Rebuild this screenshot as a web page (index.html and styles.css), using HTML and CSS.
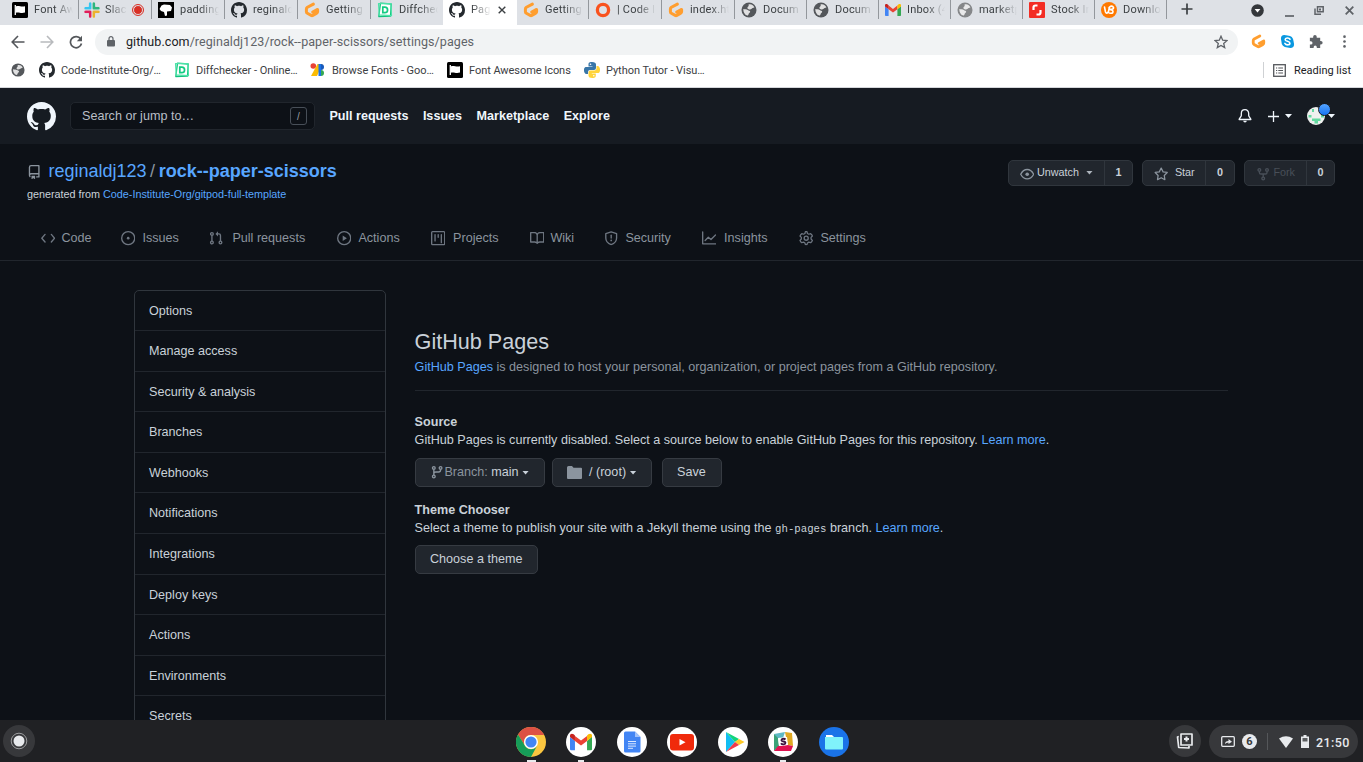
FILE: index.html
```html
<!DOCTYPE html>
<html lang="en">
<head>
<meta charset="utf-8">
<title>Pages</title>
<link rel="stylesheet" href="styles.css">
</head>
<body>
<svg class="defs" aria-hidden="true">
  <symbol id="github" viewBox="0 0 16 16"><path d="M8 0C3.58 0 0 3.58 0 8c0 3.54 2.29 6.53 5.47 7.59.4.07.55-.17.55-.38 0-.19-.01-.82-.01-1.49-2.01.37-2.53-.49-2.69-.94-.09-.23-.48-.94-.82-1.13-.28-.15-.68-.52-.01-.53.63-.01 1.08.58 1.23.82.72 1.21 1.87.87 2.33.66.07-.52.28-.87.51-1.07-1.78-.2-3.64-.89-3.64-3.95 0-.87.31-1.59.82-2.15-.08-.2-.36-1.02.08-2.12 0 0 .67-.21 2.2.82.64-.18 1.32-.27 2-.27.68 0 1.36.09 2 .27 1.53-1.04 2.2-.82 2.2-.82.44 1.1.16 1.92.08 2.12.51.56.82 1.27.82 2.15 0 3.07-1.87 3.75-3.65 3.95.29.25.54.73.54 1.48 0 1.07-.01 1.93-.01 2.2 0 .21.15.46.55.38A8.013 8.013 0 0016 8c0-4.42-3.58-8-8-8z"/></symbol>
  <symbol id="flag" viewBox="0 0 16 16"><rect width="16" height="16" rx="1.5" fill="#000"/><path d="M3.300 3v10" stroke="#fff" stroke-width="1.300"/><path d="M3.800 4.400c3-1.200 5 .8 9.200-.2v6.400c-4.200 1.200-6.200-.8-9.200.2z" fill="#fff"/></symbol>
  <symbol id="slack" viewBox="0 0 16 16"><g stroke-width="3" stroke-linecap="round"><path d="M6.200 1.800v4.400H1.800" fill="none" stroke="#36c5f0" stroke-linejoin="round"/><path d="M9.800 1.800v4.400h4.400" fill="none" stroke="#2eb67d" stroke-linejoin="round"/><path d="M14.200 9.800H9.800v4.400" fill="none" stroke="#ecb22e" stroke-linejoin="round"/><path d="M1.800 9.800h4.400v4.400" fill="none" stroke="#e01e5a" stroke-linejoin="round"/></g><path d="M4.300 0v4.500H0M11.700 0v4.500H16M16 11.500h-4.500V16M0 11.500h4.500V16M8 0v16M0 8h16" fill="none" stroke="#dee1e6" stroke-width=".8"/></symbol>
  <symbol id="padfav" viewBox="0 0 16 16"><rect width="16" height="16" fill="#000"/><path d="M1.500 7l2-3.500L6 2.500l6 .5 2 2.500-1 3.500-4 .5v4l-2 .5-1-4-3-1z" fill="#fff"/></symbol>
  <symbol id="gitpod" viewBox="0 0 16 16"><path d="M9.400 2.100L3.400 5.300Q2.400 6 2.400 7v2.700q0 1 .9 1.500l3.900 2.200q.8.500 1.600 0l4-2.300q.8-.5.8-1.400V7.400L8.700 10" fill="none" stroke="#ff9e2f" stroke-width="3" stroke-linecap="round" stroke-linejoin="round"/></symbol>
  <symbol id="diff" viewBox="0 0 16 16"><path d="M3.500 1.200L14.200 2 13.500 14 1.800 14.500z" fill="#fff" stroke="#10c27c" stroke-width="1.300" stroke-linejoin="round"/><path d="M1.500 1.500l12.500.2.500 12-12.200-.8z" fill="none" stroke="#4be3a8" stroke-width="1.200" stroke-linejoin="round"/><path d="M5.800 5.200h2c3.700 0 3.700 5.400 0 5.400h-2z" fill="none" stroke="#13cb82" stroke-width="1.700"/></symbol>
  <symbol id="globe" viewBox="0 0 16 16"><circle cx="8" cy="8" r="7.500"/><path d="M7.500 2.500c2.500-1 5.200.8 5.900 3-1.500.6-2 .3-2.700 1.200-1 .1-1.500 1.300-3 .6-1-.3-1.600-.9-1.200-2 .5-.9 1.700-.8 1-2.800zM2.300 7c1.500.3 3.500.2 4.500 1 .7.700 2.300.6 2.400 1.700.1 1-1.300 1-1.500 2-.2 1-.6 1.800-1.500 1.900C3.600 12.800 2.200 10 2.300 7z" fill="#fff" opacity=".82"/></symbol>
  <symbol id="gmail" viewBox="0 0 20 16"><path d="M0 3v11.500q0 1 1 1h3.500V7L0 3.500z" fill="#4285f4"/><path d="M15.500 7v8.500H19q1 0 1-1V3z" fill="#34a853"/><path d="M4.500 7V2.500L10 6.600l5.500-4.100V7L10 11.200z" fill="#ea4335"/><path d="M0 3.500V2.200C0 .5 1.800-.1 3.300 1l1.200 1v5z" fill="#c5221f"/><path d="M20 3.500V2.200C20 .5 18.200-.1 16.700 1l-1.200 1v5z" fill="#fbbc04"/></symbol>
  <symbol id="repo" viewBox="0 0 16 16"><path fill-rule="evenodd" d="M2 2.500A2.500 2.500 0 014.500 0h8.750a.75.75 0 01.75.75v12.500a.75.75 0 01-.75.75h-2.500a.75.75 0 110-1.500h1.750v-2h-8a1 1 0 00-.714 1.700.75.75 0 01-1.072 1.050A2.495 2.495 0 012 11.500v-9zm10.500-1V9h-8c-.356 0-.694.074-1 .208V2.500a1 1 0 011-1h8zM5 12.250v3.250a.25.25 0 00.4.2l1.450-1.087a.25.25 0 01.3 0L8.600 15.700a.25.25 0 00.4-.2v-3.250a.25.25 0 00-.25-.25h-3.500a.25.25 0 00-.25.25z"/></symbol>
  <symbol id="code" viewBox="0 0 16 16"><path d="M4.500 3.800L.9 8l3.600 4.200M11.500 3.800L15.100 8l-3.600 4.200" fill="none" stroke="currentColor" stroke-width="1.500" stroke-linecap="round" stroke-linejoin="round"/></symbol>
  <symbol id="issue" viewBox="0 0 16 16"><circle cx="8" cy="8" r="7.250" fill="none" stroke="currentColor" stroke-width="1.500"/><circle cx="8" cy="8" r="1.500"/></symbol>
  <symbol id="pr" viewBox="0 0 16 16"><g fill="none" stroke="currentColor" stroke-width="1.500"><circle cx="3.250" cy="3.250" r="1.500"/><circle cx="3.250" cy="12.750" r="1.500"/><circle cx="12.750" cy="12.750" r="1.500"/><path d="M3.250 5v6M12.750 11V5q0-1.750-1.750-1.750H8.500"/></g><path d="M7.200 3.250L10 .4v5.700z"/></symbol>
  <symbol id="play" viewBox="0 0 16 16"><circle cx="8" cy="8" r="7.250" fill="none" stroke="currentColor" stroke-width="1.500"/><path d="M6.300 5l4.700 3-4.700 3z"/></symbol>
  <symbol id="project" viewBox="0 0 16 16"><rect x=".75" y=".75" width="14.500" height="14.500" rx="1" fill="none" stroke="currentColor" stroke-width="1.500"/><path d="M4.500 4v7M8 4v3M11.500 4v9" stroke="currentColor" stroke-width="1.500" stroke-linecap="round"/></symbol>
  <symbol id="book" viewBox="0 0 16 16"><path fill-rule="evenodd" d="M0 1.750A.75.75 0 01.75 1h4.253c1.227 0 2.317.590 3 1.501A3.744 3.744 0 0111.006 1h4.245a.75.75 0 01.75.75v10.500a.75.75 0 01-.75.75h-4.507a2.250 2.250 0 00-1.591.659l-.622.621a.75.75 0 01-1.060 0l-.622-.621A2.250 2.250 0 005.258 13H.75a.75.75 0 01-.75-.75V1.750zm8.755 3a2.250 2.250 0 012.250-2.250H14.500v9h-3.757c-.710 0-1.400.201-1.992.572l.004-7.322zm-1.504 7.324l.004-5.073-.002-2.253A2.250 2.250 0 005.003 2.500H1.500v9h3.757a3.750 3.750 0 011.994.574z"/></symbol>
  <symbol id="shield" viewBox="0 0 16 16"><path d="M8 .9l6 1.900v4.900c0 3.800-2.600 6.200-6 7.500-3.400-1.300-6-3.700-6-7.500V2.800z" fill="none" stroke="currentColor" stroke-width="1.500" stroke-linejoin="round"/><path d="M8 4.700v3.100" stroke="currentColor" stroke-width="1.500" stroke-linecap="round"/><circle cx="8" cy="10.500" r="1"/></symbol>
  <symbol id="graph" viewBox="0 0 16 16"><path d="M.75 1v13.250H16M3.500 10.500L7 7l3 2.500 5-5" fill="none" stroke="currentColor" stroke-width="1.500" stroke-linecap="round" stroke-linejoin="round"/></symbol>
  <symbol id="gear" viewBox="0 0 16 16"><path d="M7.100.8h1.800l.5 2 1.500.8 2-.6 1.300 1.200.7 1.400-1.500 1.500v1.800l1.500 1.500-.8 1.500-1.200 1.100-2-.6-1.500.9-.5 1.900H7.100l-.5-1.900-1.500-.9-2 .6-1.200-1.100-.8-1.500 1.500-1.500V7.100L1.100 5.600l.8-1.400L3.100 3l2 .6 1.500-.8z" fill="none" stroke="currentColor" stroke-width="1.400" stroke-linejoin="round"/><circle cx="8" cy="8" r="2.250" fill="none" stroke="currentColor" stroke-width="1.500"/></symbol>
  <symbol id="bell" viewBox="0 0 16 16"><path d="M8 .8c-2.500 0-4.200 1.800-4.200 4.200v2.500c0 1.200-2.500 3.500-2.500 4.500h13.400c0-1-2.500-3.300-2.500-4.500V5C12.200 2.600 10.500.8 8 .8z" fill="none" stroke="currentColor" stroke-width="1.500" stroke-linejoin="round"/><path d="M6 13.500h4a2 2 0 01-4 0z"/></symbol>
  <symbol id="eye" viewBox="0 0 16 16"><path d="M.8 8C2.300 5.200 4.800 2.800 8 2.800S13.700 5.200 15.200 8C13.700 10.800 11.200 13.200 8 13.200S2.300 10.800.8 8z" fill="none" stroke="currentColor" stroke-width="1.500"/><circle cx="8" cy="8" r="2"/></symbol>
  <symbol id="star" viewBox="0 0 16 16"><path d="M8 1.200l2.100 4.200 4.600.7-3.300 3.300.7 4.700L8 11.900l-4.100 2.200.7-4.700L1.300 6.100l4.600-.7z" fill="none" stroke="currentColor" stroke-width="1.400" stroke-linejoin="round"/></symbol>
  <symbol id="fork" viewBox="0 0 16 16"><g fill="none" stroke="currentColor" stroke-width="1.500"><circle cx="3.750" cy="3.250" r="1.500"/><circle cx="12.250" cy="3.250" r="1.500"/><circle cx="8" cy="12.750" r="1.500"/><path d="M3.750 5v1q0 1.750 1.750 1.750h5Q12.250 7.750 12.250 6V5M8 7.750V11"/></g></symbol>
  <symbol id="branch" viewBox="0 0 16 16"><g fill="none" stroke="currentColor" stroke-width="1.500"><circle cx="4.250" cy="3.250" r="1.500"/><circle cx="4.250" cy="12.750" r="1.500"/><circle cx="11.750" cy="3.250" r="1.500"/><path d="M4.250 5v6M11.750 5v.5Q11.750 7.750 9.500 7.750H6.500q-2.250 0-2.250 2"/></g></symbol>
  <symbol id="python" viewBox="0 0 16 16"><path d="M8 0C4.500 0 4.500 1 4.500 3v1.500h4V5H2.500C0 5 0 7 0 8.500S.8 12 2.500 12H4v-2q0-2 2-2h4q2 0 2-2V2.500Q12 0 8 0z" fill="#3976a8"/><path d="M8.300 16c3.500 0 3.500-1 3.500-3v-1.500h-4V11h6C16 11 16 9 16 7.500S15.200 4 13.500 4h-1v2.500q0 2-2 2h-4q-2 0-2 2v3q0 2.500 3.800 2.500z" fill="#ffd43b"/><circle cx="6.500" cy="2.300" r=".8" fill="#fff"/><circle cx="9.800" cy="13.700" r=".8" fill="#fff"/></symbol>
</svg>

<div class="tabstrip">
  <div class="tabs">
    <div class="tab"><svg class="fav"><use href="#flag"/></svg><span class="title">Font Aw</span></div>
    <div class="tab recording"><svg class="fav"><use href="#slack"/></svg><span class="title">Slac</span><i class="rec"></i></div>
    <div class="tab"><svg class="fav"><use href="#padfav"/></svg><span class="title">padding</span></div>
    <div class="tab"><svg class="fav ink"><use href="#github"/></svg><span class="title">reginald</span></div>
    <div class="tab"><svg class="fav"><use href="#gitpod"/></svg><span class="title">Getting</span></div>
    <div class="tab before"><svg class="fav"><use href="#diff"/></svg><span class="title">Diffchec</span></div>
    <div class="tab active"><svg class="fav ink"><use href="#github"/></svg><span class="title">Pag</span><svg class="close" viewBox="0 0 8 8"><path d="M.7.7l6.600 6.600M7.300.7L.7 7.300"/></svg></div>
    <div class="tab after"><svg class="fav"><use href="#gitpod"/></svg><span class="title">Getting</span></div>
    <div class="tab"><svg class="fav" viewBox="0 0 16 16"><circle cx="8" cy="8" r="5.600" fill="none" stroke="#f9521e" stroke-width="3.300"/></svg><span class="title">| Code In</span></div>
    <div class="tab"><svg class="fav"><use href="#gitpod"/></svg><span class="title">index.ht</span></div>
    <div class="tab"><svg class="fav gray"><use href="#globe"/></svg><span class="title">Docum</span></div>
    <div class="tab"><svg class="fav gray"><use href="#globe"/></svg><span class="title">Docum</span></div>
    <div class="tab"><svg class="fav"><use href="#gmail"/></svg><span class="title">Inbox (4</span></div>
    <div class="tab"><svg class="fav light"><use href="#globe"/></svg><span class="title">marketp</span></div>
    <div class="tab"><svg class="fav" viewBox="0 0 16 16"><rect width="16" height="16" rx="1" fill="#f32d24"/><path d="M8.500 3.500H6.500Q4.500 3.500 4.500 5.500V8M7.500 12.500h2q2 0 2-2V8" fill="none" stroke="#fff" stroke-width="2.200"/></svg><span class="title">Stock In</span></div>
    <div class="tab"><svg class="fav" viewBox="0 0 16 16"><circle cx="8" cy="8" r="8" fill="#ff7900"/><path d="M3.500 5l1 5q1 2.500 3-.5l1-4.500q2.500-2 4 .5c.5 2-3 2-4 1.500 1 2 3.500 0 3.500 2.500s-3.500 2-4.500 1" fill="none" stroke="#fff" stroke-width="1.600" stroke-linecap="round"/></svg><span class="title">Downlo</span></div>
  </div>
  <svg class="newtab" viewBox="0 0 12 12"><path d="M6 .5v11M.5 6h11" stroke="#3c4043" stroke-width="1.700"/></svg>
  <div class="winbtns">
    <svg width="13" height="13" viewBox="0 0 13 13"><circle cx="6.500" cy="6.500" r="6.300" fill="#34373b"/><path d="M3.600 5h5.800L6.500 8.500z" fill="#fff"/></svg>
    <svg class="minimize" width="9" height="12" viewBox="0 0 9 12"><path d="M0 11h9" stroke="#5f6368" stroke-width="1.700"/></svg>
    <svg width="10" height="9" viewBox="0 0 10 9"><path d="M3.500.8h5.700v5H3.500zM1 2.500v5.700h6" fill="none" stroke="#5f6368" stroke-width="1.500"/><path d="M5 2.500h2v2H5z" fill="#5f6368"/></svg>
    <svg width="9" height="9" viewBox="0 0 9 9"><path d="M.7.700l7.600 7.600M8.300.7L.7 8.300" stroke="#5f6368" stroke-width="1.800"/></svg>
  </div>
</div>

<div class="toolbar">
  <div class="navbtns">
    <svg viewBox="0 0 14 14"><path d="M13.500 7H1.500M7 1L1.200 7 7 13" fill="none" stroke="#54575b" stroke-width="1.600"/></svg>
    <svg viewBox="0 0 14 14"><path d="M.5 7h12M7 1l5.800 6L7 13" fill="none" stroke="#b8babd" stroke-width="1.600"/></svg>
    <svg viewBox="0 0 14 14"><path d="M11.700 4A5.600 5.600 0 1012.500 8.500" fill="none" stroke="#54575b" stroke-width="1.700"/><path d="M13 .8v5.400H7.800z" fill="#54575b"/></svg>
  </div>
  <div class="omnibox">
    <svg class="lock" viewBox="0 0 8 11"><rect y="4" width="8" height="6.500" rx="1" fill="#5f6368"/><path d="M2 4.500V2.700a2 2 0 014 0v1.800" fill="none" stroke="#5f6368" stroke-width="1.200"/></svg>
    <span class="url"><b>github.com</b>/reginaldj123/rock--paper-scissors/settings/pages</span>
    <svg class="bookmark-star" viewBox="0 0 14 14"><path d="M7 1.200l1.700 4 4.300.4-3.300 2.800 1 4.200L7 10.400l-3.700 2.200 1-4.200L1 5.600l4.300-.4z" fill="none" stroke="#5f6368" stroke-width="1.300"/></svg>
  </div>
  <div class="extensions">
    <svg viewBox="0 0 16 16"><use href="#gitpod"/></svg>
    <svg viewBox="0 0 16 16"><path d="M4.500 1Q1 1 1 5l.5 3Q1.500 14 8 14.500L11 15q4 0 4-4l-.5-3Q14 1.500 8 1.500z" fill="#0a98e0"/><path d="M10.700 5.600C9.500 3.500 5.500 4 5.500 6S10.600 7.600 10.600 9.800 6.500 12.200 5.200 10" fill="none" stroke="#fff" stroke-width="1.700" stroke-linecap="round"/></svg>
    <svg viewBox="0 0 16 16"><path d="M2 4h3.500V3a1.900 1.900 0 013.800 0v1H13v3.500h.7a1.900 1.900 0 010 3.800H13V15H9.400v-1a1.700 1.700 0 00-3.400 0v1H2v-3.700h1a1.800 1.800 0 000-3.600H2z" fill="#5f6368"/></svg>
    <svg viewBox="0 0 16 16"><g fill="#5f6368"><circle cx="8" cy="2.800" r="1.400"/><circle cx="8" cy="8" r="1.400"/><circle cx="8" cy="13.200" r="1.400"/></g></svg>
  </div>
</div>

<div class="bookmarks">
  <div class="links">
    <div><svg class="fav small gray"><use href="#globe"/></svg></div>
    <div><svg class="fav ink"><use href="#github"/></svg><span>Code-Institute-Org/…</span></div>
    <div><svg class="fav"><use href="#diff"/></svg><span>Diffchecker - Online…</span></div>
    <div><svg class="fav" viewBox="0 0 16 16"><circle cx="3.300" cy="4" r="2.800" fill="#ea4335"/><path d="M7.500 2h5L7 14H1z" fill="#fbbc04"/><path d="M8.500 2H11v12H8.500z" fill="#1a73e8"/><path d="M11 2a3 3 0 010 6z" fill="#185abc"/><path d="M11 8a3 3 0 010 6z" fill="#34a853"/></svg><span>Browse Fonts - Goo…</span></div>
    <div><svg class="fav"><use href="#flag"/></svg><span>Font Awesome Icons</span></div>
    <div><svg class="fav"><use href="#python"/></svg><span>Python Tutor - Visu…</span></div>
  </div>
  <div class="reading"><svg viewBox="0 0 13 13"><rect x=".7" y=".7" width="11.600" height="11.600" fill="none" stroke="#54575b" stroke-width="1.300"/><path d="M3 4h1.200M3 6.500h1.200M3 9h1.200M5.300 4H10M5.300 6.500H10M5.300 9H10" stroke="#54575b" stroke-width="1.200"/></svg><span>Reading list</span></div>
</div>

<div class="page">
  <header class="gh-header">
    <svg class="logo"><use href="#github"/></svg>
    <div class="search"><span>Search or jump to…</span><kbd>/</kbd></div>
    <nav><a>Pull requests</a><a>Issues</a><a>Marketplace</a><a>Explore</a></nav>
    <div class="user">
      <svg class="bell"><use href="#bell"/></svg>
      <svg class="plus" viewBox="0 0 11 11"><path d="M5.500 0v11M0 5.500h11" stroke="#f0f6fc" stroke-width="1.300"/></svg><i class="caret"></i>
      <div class="avatar"><svg viewBox="0 0 18 18"><circle cx="9" cy="9" r="9" fill="#eef0ef"/><path d="M5 2h2v3H5zM1.500 8h3v2.500h-3zM14 8h3v2.500h-3zM5 11.500h8.500V14H11v2.500H7.500V14H5z" fill="#63d9a0"/></svg><i class="dot"></i></div><i class="caret"></i>
    </div>
  </header>

  <section class="repohead">
    <div class="repotop">
      <div>
        <h1><svg><use href="#repo"/></svg><a>reginaldj123</a><span class="slash">/</span><a class="strong">rock--paper-scissors</a></h1>
        <p>generated from <a>Code-Institute-Org/gitpod-full-template</a></p>
      </div>
      <div class="actions">
        <div class="pair watch"><span><svg><use href="#eye"/></svg>Unwatch<i class="caret"></i></span><b>1</b></div>
        <div class="pair starbtn"><span><svg><use href="#star"/></svg>Star</span><b>0</b></div>
        <div class="pair forkbtn"><span class="disabled"><svg><use href="#fork"/></svg>Fork</span><b>0</b></div>
      </div>
    </div>
    <nav class="reponav">
      <a class="tight"><svg><use href="#code"/></svg>Code</a>
      <a><svg><use href="#issue"/></svg>Issues</a>
      <a class="wide"><svg><use href="#pr"/></svg>Pull requests</a>
      <a><svg><use href="#play"/></svg>Actions</a>
      <a class="loose"><svg><use href="#project"/></svg>Projects</a>
      <a class="tight"><svg><use href="#book"/></svg>Wiki</a>
      <a><svg><use href="#shield"/></svg>Security</a>
      <a class="loose"><svg><use href="#graph"/></svg>Insights</a>
      <a><svg><use href="#gear"/></svg>Settings</a>
    </nav>
  </section>

  <div class="content">
    <aside class="menu">
      <a>Options</a><a>Manage access</a><a>Security &amp; analysis</a><a>Branches</a><a>Webhooks</a><a>Notifications</a><a>Integrations</a><a>Deploy keys</a><a>Actions</a><a>Environments</a><a>Secrets</a>
    </aside>
    <main>
      <h2>GitHub Pages</h2>
      <p class="lead"><a>GitHub Pages</a> is designed to host your personal, organization, or project pages from a GitHub repository.</p>
      <h3>Source</h3>
      <p>GitHub Pages is currently disabled. Select a source below to enable GitHub Pages for this repository. <a>Learn more</a>.</p>
      <div class="buttons">
        <div class="btn branch"><svg><use href="#branch"/></svg><span class="muted">Branch:</span>&nbsp;main<i class="caret"></i></div>
        <div class="btn root"><svg class="folder" viewBox="0 0 15 13"><path d="M1.500 0H5l1.500 1.700H14q1 0 1 1V12q0 1-1 1H1q-1 0-1-1V1.500Q0 0 1.500 0z"/></svg>/ (root)<i class="caret"></i></div>
        <div class="btn save">Save</div>
      </div>
      <h3>Theme Chooser</h3>
      <p>Select a theme to publish your site with a Jekyll theme using the <code>gh-pages</code> branch. <a>Learn more</a>.</p>
      <div class="btn choose">Choose a theme</div>
    </main>
  </div>
</div>

<footer class="shelf">
  <div class="launcher"><svg viewBox="0 0 18 18"><circle cx="9" cy="9" r="7.800" fill="none" stroke="#9b9c9e" stroke-width="1"/><circle cx="9" cy="9" r="5.500" fill="#e8eaed"/></svg></div>
  <div class="apps">
    <div class="app wide-run"><svg viewBox="0 0 30 30"><circle cx="15" cy="15" r="15" fill="#fbc640"/><path d="M2 7.500A15 15 0 0128 7.500L27.800 8H15a7 7 0 00-6.100 10.500z" fill="#dd5144"/><path d="M2 7.500A15 15 0 0015 30l6.200-11.500A7 7 0 018.900 18.500z" fill="#169d59"/><circle cx="15" cy="15" r="7" fill="#fff"/><circle cx="15" cy="15" r="5.600" fill="#4285f4"/></svg></div>
    <div class="app run"><svg viewBox="0 0 30 30"><circle cx="15" cy="15" r="15" fill="#fff"/><use href="#gmail" x="4" y="6" width="22" height="18"/></svg></div>
    <div class="app"><svg viewBox="0 0 30 30"><circle cx="15" cy="15" r="15" fill="#fff"/><path d="M8.500 4.500H18l5.500 5.500v14q0 1.500-1.500 1.500H8.500Q7 25.500 7 24V6q0-1.500 1.500-1.500z" fill="#4285f4"/><path d="M18 4.500l5.500 5.500H18z" fill="#a1c2fa"/><path d="M11 14.500h8M11 16.800h8M11 19.100h8M11 21.300h5" stroke="#dce8ff" stroke-width="1"/></svg></div>
    <div class="app"><svg viewBox="0 0 30 30"><circle cx="15" cy="15" r="15" fill="#fff"/><rect x="3" y="7" width="24" height="16.500" rx="3" fill="#f02a0c"/><path d="M12.500 12v6.500l6-3.250z" fill="#fff"/></svg></div>
    <div class="app"><svg viewBox="0 0 30 30"><circle cx="15" cy="15" r="15" fill="#fff"/><path d="M8 5v20l9-10z" fill="#12bdf2"/><path d="M8 5l13 7-4 3z" fill="#12d47b"/><path d="M17 15l4-3 5.500 3-5.500 3z" fill="#ffca28"/><path d="M8 25l13-7-4-3z" fill="#f03a4b"/></svg></div>
    <div class="app run"><svg viewBox="0 0 30 30"><circle cx="15" cy="15" r="15" fill="#fff"/><path d="M6 7l11-2-2 6-6 1z" fill="#5fb8c4"/><path d="M17 5l7 1 1 13-5-1-2-8z" fill="#dfa822"/><path d="M6 7l4 4 1 8-5 5z" fill="#3aa276"/><path d="M6 24l4-5 10-1 5 1-2 5z" fill="#df1250"/><path d="M10 11l9-1 1 8-9 1z" fill="#fff"/><path d="M17.500 12.500c-1.500-1.500-4.500-.5-4 1s4 .5 4 2.300-3.500 2-4.500.4" fill="none" stroke="#3d143e" stroke-width="1.800"/></svg></div>
    <div class="app"><svg viewBox="0 0 30 30"><circle cx="15" cy="15" r="15" fill="#1a73e8"/><path d="M7 8h6l2 2h-8z" fill="#fff"/><path d="M6 10h17q1 0 1 1v10.500q0 1-1 1H7q-1 0-1-1z" fill="#80f2fb"/></svg></div>
  </div>
  <div class="tray">
    <div class="holding"><svg viewBox="0 0 18 18"><path d="M5 2h11v11H5zM2.800 4.500L1.500 5l1.200 10.500L13 16v-2" fill="none" stroke="#e8eaed" stroke-width="1.700" stroke-linejoin="round"/><path d="M10.500 4.500v5M8 7h5" stroke="#e8eaed" stroke-width="2"/></svg></div>
    <div class="status">
      <svg class="cast" viewBox="0 0 14 11"><rect x=".7" y=".7" width="12.600" height="9.600" rx="1" fill="none" stroke="#e8eaed" stroke-width="1.300"/><path d="M4 8q0-3 3.500-3V3L11 5.700 7.500 8V6.500Q5 6.500 4 8z" fill="#e8eaed"/></svg>
      <span class="count">6</span><i class="bar"></i>
      <svg class="wifi" viewBox="0 0 14 12"><path d="M0 2.500Q7-2 14 2.500L7 12z" fill="#e8eaed"/></svg>
      <svg class="battery" viewBox="0 0 8 13"><path d="M2.500 0h3v1.500H8V13H0V1.500h2.500z" fill="#e8eaed"/><path d="M1.500 3h5v3.500h-5z" fill="#5c5e60"/></svg>
      <span class="time">21:50</span>
    </div>
  </div>
</footer>
</body>
</html>
```
FILE: styles.css
```css
* { box-sizing: border-box; }
body {
  margin: 0;
  width: 1363px;
  height: 762px;
  overflow: hidden;
  display: flex;
  flex-direction: column;
  background: #0d1117;
  font-family: "Liberation Sans", Arial, sans-serif;
}
svg { display: block; flex: none; fill: currentColor; }
.defs { position: absolute; width: 0; height: 0; }
h1, h2, h3, p { margin: 0; font-weight: normal; }

/* Browser tab strip */
.tabstrip { height: 25px; flex: none; display: flex; align-items: flex-start; background: #dee1e6; font: 11px/16px Roboto, sans-serif; color: #3c4043; }
.tabs { display: grid; grid-template-columns: 79px 73px 73px 73px 73px 72px 74px 72px 73px 73px 72px 72px 72px 72px 72px 72px; height: 25px; }
.tab { display: flex; align-items: center; gap: 6px; height: 19px; padding: 0 4px 0 6px; border-right: 1px solid #93979c; min-width: 0; }
.tab:first-child { padding-left: 12px; }
.title { flex: 1; min-width: 0; white-space: nowrap; letter-spacing: .2px; -webkit-mask-image: linear-gradient(to right, #000 calc(100% - 20px), transparent calc(100% - 1px)); mask-image: linear-gradient(to right, #000 calc(100% - 20px), transparent calc(100% - 1px)); }
.tab.recording { padding: 0 8px 0 5px; gap: 5px; }
.tab.before { border-right: 0; border-bottom-right-radius: 6px; }
.tab.active { height: 25px; padding: 0 11px 6px 6px; background: #fff; border: 0; }
.fav { width: 16px; height: 16px; }
.fav.small { width: 14px; height: 14px; }
.ink { color: #24292e; }
.gray { color: #54575b; }
.light { color: #858789; }
.rec { width: 10px; height: 10px; flex: none; border-radius: 50%; background: #d93025; border: 1px solid #dee1e6; outline: 1px solid #d93025; }
.close { width: 8px; height: 8px; stroke: #3c4043; stroke-width: 1.4; }
.newtab { width: 12px; height: 12px; margin: 3px 0 0 14px; }
.winbtns { margin-left: auto; padding: 3px 9px 0 0; display: flex; align-items: center; gap: 21px; height: 18px; }
.minimize { margin-right: -1px; }

/* Address row */
.toolbar { height: 33px; flex: none; background: #fff; display: flex; align-items: center; }
.navbtns { width: 95px; display: flex; gap: 15px; padding-left: 11px; }
.navbtns svg { width: 14px; height: 14px; }
.omnibox { width: 1143px; height: 26px; border-radius: 13px; background: #f1f3f4; display: flex; align-items: center; padding: 0 10px 0 12px; }
.lock { width: 8px; height: 11px; }
.url { flex: 1; margin-left: 11px; font: 12.5px/16px Roboto, sans-serif; letter-spacing: .075px; color: #5f6368; }
.url b { font-weight: normal; color: #202124; }
.bookmark-star { width: 14px; height: 14px; }
.extensions { display: flex; gap: 13.500px; margin-left: 13px; }
.extensions svg { width: 15px; height: 15px; }

/* Bookmarks bar */
.bookmarks { height: 30px; flex: none; background: #fff; border-bottom: 1px solid #d5d7db; display: flex; align-items: center; justify-content: space-between; padding: 0 12px 5px 11px; font: 11px/14px Roboto, sans-serif; color: #3c4043; }
.links { display: grid; grid-template-columns: 28px 135px 136px 137px 137px 140px; letter-spacing: -.05px; }
.links div { display: flex; align-items: center; gap: 6px; white-space: nowrap; }
.bookmarks span { padding-top: 2px; }
.reading { display: flex; align-items: center; gap: 8px; border-left: 1px solid #cfd1d4; padding-left: 9px; color: #202124; }
.reading svg { width: 13px; height: 13px; }

/* GitHub page */
.page { flex: 1; min-height: 0; overflow: hidden; color: #c9d1d9; font-size: 12.6px; line-height: 18px; }
.page a { color: #58a6ff; }
.caret { width: 7px; height: 4px; flex: none; background: currentColor; clip-path: polygon(0 0, 100% 0, 50% 100%); }
.gh-header { height: 56px; background: #161b22; display: flex; align-items: center; padding: 0 28px 0 27px; color: #f0f6fc; }
.logo { width: 29px; height: 29px; }
.search { width: 245px; height: 28px; margin-left: 14px; padding: 0 7px 0 11px; display: flex; align-items: center; justify-content: space-between; background: #0d1117; border: 1px solid #21262d; border-radius: 5px; color: #b9bfc6; }
.search kbd { width: 17px; height: 18px; border: 1px solid #484f58; border-radius: 3px; text-align: center; font: 10px/17px "Liberation Sans", sans-serif; color: #9ca2a9; }
.gh-header nav { display: flex; gap: 14.4px; margin-left: 14.400px; font-weight: bold; }
.gh-header nav a { color: #f0f6fc; }
.user { margin-left: auto; display: flex; align-items: center; }
.bell { width: 14px; height: 14px; margin-right: 16px; }
.plus { width: 11px; height: 11px; margin-right: 6px; }
.avatar { position: relative; margin: 0 3px 0 15px; }
.avatar svg { width: 18px; height: 18px; }
.dot { position: absolute; width: 13px; height: 13px; right: -6px; top: -4px; border-radius: 50%; border: 1px solid #161b22; background: linear-gradient(#54a3ff, #1674f2); }

.repohead { height: 117px; border-bottom: 1px solid #21262d; display: flex; flex-direction: column; justify-content: space-between; }
.repotop { display: flex; justify-content: space-between; padding: 14px 28px 0 27px; }
h1 { display: flex; align-items: center; height: 26px; font-size: 18px; line-height: 26px; }
h1 svg { width: 14.400px; height: 14.400px; margin: 2px 7px 0 0; color: #8b949e; }
.slash { margin: 0 3.600px; color: #8b949e; }
.strong { font-weight: bold; }
.repotop p { font-size: 10.8px; line-height: 16px; margin-top: 2px; letter-spacing: -.01px; }
.actions { display: flex; gap: 9px; padding-top: 2px; font-size: 10.8px; }
.pair { height: 26px; display: flex; line-height: 23px; background: #21262d; border: 1px solid #30363d; border-radius: 5px; }
.pair span { flex: 1; display: flex; align-items: center; padding: 0 0 1px 11px; }
.pair svg { width: 14.400px; height: 14.400px; margin-top: 4px; color: #8b949e; }
.pair b { width: 28px; text-align: center; border-left: 1px solid #30363d; }
.pair .disabled, .pair .disabled svg { color: #484f58; }
.watch { width: 125px; }
.watch svg { margin-right: 2.500px; }
.watch .caret { margin-left: 7px; color: #adb4bc; }
.starbtn { width: 93px; }
.starbtn svg { margin-right: 6.500px; }
.starbtn b { width: 29px; }
.forkbtn { width: 91px; }
.forkbtn svg { margin-right: 3px; }
.reponav { display: grid; grid-template-columns: 80px 88px 128px 94px 99px 74px 98px 97px 90px; padding-left: 41px; height: 44px; }
.page .reponav a { display: flex; align-items: center; gap: 7px; color: #8b949e; }
.reponav svg { width: 14.400px; height: 14.400px; margin-top: 1px; color: #6e7681; }
.page .reponav .wide { gap: 9px; }
.page .reponav .tight { gap: 6px; }
.page .reponav .loose { gap: 7.700px; }

.content { display: flex; align-items: flex-start; gap: 28.600px; padding: 29px 0 0 134px; }
.menu { width: 252px; flex: none; border: 1px solid #30363d; border-radius: 5px; }
.page .menu a { display: block; height: 40.600px; padding: 11px 14px 0; line-height: 19px; border-bottom: 1px solid #21262d; color: #c9d1d9; }
.page .menu a:first-child { height: 40.050px; }
main { width: 813.600px; padding-top: 38px; }
h2 { font-size: 21.6px; line-height: 28px; }
.lead { height: 35px; padding-top: 2px; margin-bottom: 22px; color: #8b949e; border-bottom: 1px solid #21262d; }
h3 { font-size: 12.6px; line-height: 18px; font-weight: bold; }
.buttons { display: flex; margin: 9px 0 14px; }
.btn { height: 29px; display: flex; align-items: center; border: 1px solid #363b42; border-radius: 5px; background: #21262d; padding: 0 0 1px 14.400px; }
.btn svg { width: 14.400px; height: 14.400px; color: #8b949e; }
.btn .caret { margin: 1px 0 0 3.500px; }
.muted { color: #8b949e; }
.branch { width: 130px; margin-right: 7px; }
.root { width: 100px; margin-right: 10px; }
.btn .folder { width: 15px; height: 13px; margin-right: 7px; }
.save { width: 60px; }
.choose { width: 123px; margin-top: 8px; }
code { font: 10.7px "Liberation Mono", monospace; }

/* System shelf */
.shelf { height: 42px; flex: none; display: flex; background: #202124; }
.launcher, .holding { width: 32px; height: 32px; border-radius: 50%; background: #37383b; display: flex; align-items: center; justify-content: center; }
.launcher { margin: 5px 0 0 3px; }
.launcher svg, .holding svg { width: 18px; height: 18px; }
.apps { display: flex; gap: 20.500px; margin: 7px 0 0 480.500px; }
.app { position: relative; width: 30px; }
.app svg { width: 30px; height: 30px; }
.run::after, .wide-run::after { content: ""; position: absolute; bottom: 0; left: 12px; width: 6px; height: 2px; background: #e8eaed; }
.wide-run::after { left: 11px; width: 9px; }
.tray { display: flex; gap: 8px; margin-left: auto; padding: 5px 5px 0 0; }
.status { width: 149px; height: 33px; border-radius: 17px; background: #37383b; display: flex; align-items: center; padding-left: 12px; color: #e8eaed; }
.cast { width: 14px; height: 11px; }
.count { width: 15px; height: 15px; margin-left: 7px; border-radius: 50%; background: #e8eaed; color: #37383b; text-align: center; font: bold 11px/15px Roboto, sans-serif; }
.bar { width: 1px; height: 17px; margin: 0 11px 0 10px; background: #55575a; }
.wifi { width: 14px; height: 12px; }
.battery { width: 8px; height: 13px; margin: 0 7px 0 8px; }
.time { padding-top: 2px; font: 500 12.5px/16px Roboto, sans-serif; letter-spacing: .4px; }
```
